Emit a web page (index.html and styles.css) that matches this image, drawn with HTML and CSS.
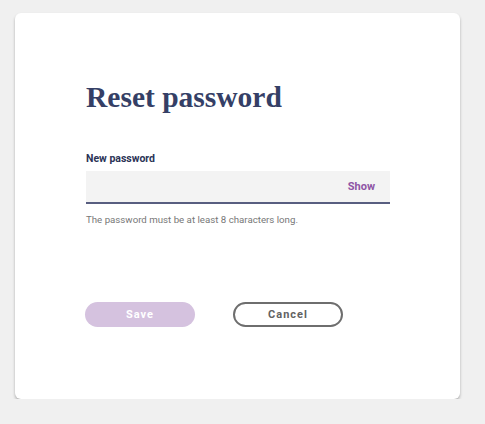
FILE: index.html
```html
<!DOCTYPE html>
<html>
<head>
<meta charset="utf-8">
<link rel="stylesheet" href="styles.css">
</head>
<body>
<div class="card">
  <h1 class="title">Reset password</h1>
  <label class="label" for="pw">New password</label>
  <div class="field">
    <input id="pw" class="input" type="password">
    <span class="show">Show</span>
  </div>
  <p class="hint">The password must be at least 8 characters long.</p>
  <div class="actions">
    <button class="btn btn-save">Save</button>
    <button class="btn btn-cancel">Cancel</button>
  </div>
</div>
</body>
</html>
```
FILE: styles.css
```css
html, body {
  margin: 0;
  padding: 0;
  background: #f0f0f0;
}
body {
  padding: 13px 0 0 15px;
  font-family: Roboto, "Liberation Sans", sans-serif;
}
.card {
  box-sizing: border-box;
  width: 445px;
  height: 386px;
  background: #fff;
  border-radius: 6px;
  box-shadow: 0 2px 3px rgba(0,0,0,0.28);
  padding: 67px 70px 0 71px;
}
.title {
  margin: 0;
  font-family: "Liberation Serif", serif;
  font-weight: bold;
  font-size: 29.5px;
  line-height: 35px;
  color: #353f66;
}
.label {
  display: block;
  margin-top: 37px;
  font-size: 10.5px;
  line-height: 14px;
  font-weight: bold;
  color: #2b3356;
}
.field {
  margin-top: 5px;
  height: 31px;
  background: #f3f3f3;
  border-bottom: 2px solid #585e80;
  display: flex;
  align-items: center;
}
.input {
  flex: 1;
  border: 0;
  background: transparent;
  outline: none;
  height: 100%;
}
.show {
  font-size: 11px;
  font-weight: bold;
  color: #8e55a5;
  margin-right: 15px;
}
.hint {
  margin: 10px 0 0;
  font-size: 9.7px;
  line-height: 12px;
  color: #777;
}
.actions {
  display: flex;
  gap: 38px;
  margin-top: 76px;
}
.btn {
  box-sizing: border-box;
  width: 110px;
  height: 25px;
  border-radius: 13px;
  font-family: Roboto, "Liberation Sans", sans-serif;
  font-weight: bold;
  font-size: 11px;
  letter-spacing: 1px;
  padding: 0;
}
.btn-save {
  background: #d5c2df;
  border: 0;
  color: #fff;
  margin-left: -1px;
}
.btn-cancel {
  background: #fff;
  border: 2px solid #6e6e6e;
  color: #626262;
}
```
